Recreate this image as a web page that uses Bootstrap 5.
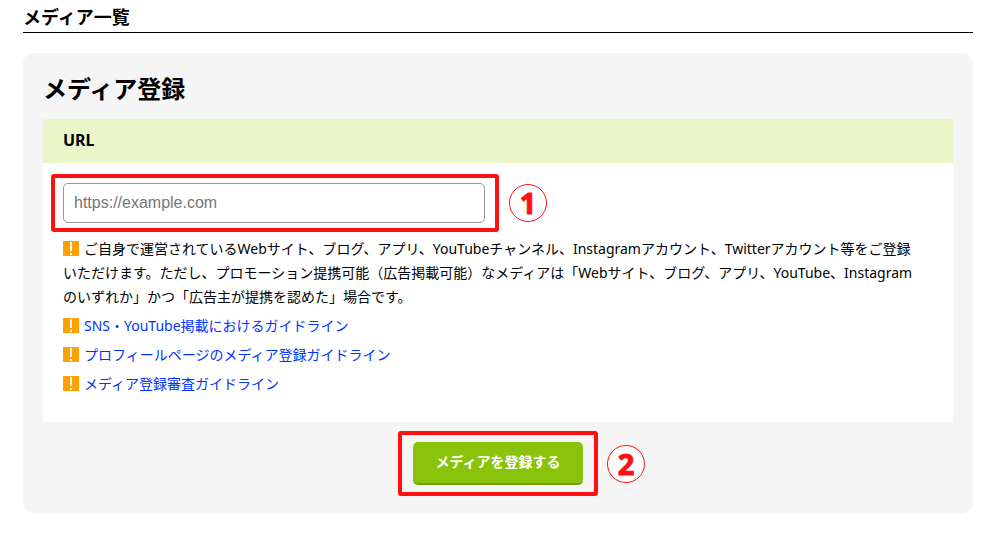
<!DOCTYPE html>
<html lang="ja">
<head>
<meta charset="utf-8">
<meta name="viewport" content="width=device-width, initial-scale=1">
<title>メディア一覧</title>
<link href="https://cdn.jsdelivr.net/npm/bootstrap@5.3.0/dist/css/bootstrap.min.css" rel="stylesheet">
<style>
  body { font-family: "Noto Sans", "Noto Sans CJK JP", sans-serif; font-size: 14px; line-height: 24px; color: #000; }
  .page { padding: 3px 30px 23px 23px; }
  .page-title { font-size: 18px; line-height: 28px; padding-bottom: 1px; border-bottom: 1px solid #000; margin-bottom: 20px; }
  .panel { background: #f5f5f5; border-radius: 10px; padding: 20px; }
  .panel-title { font-size: 24px; line-height: 32px; margin-bottom: 14px; }
  .field-head { background: #eaf6c8; padding: 9px 20px 11px; font-size: 16px; }
  .field-body { background: #fff; padding: 20px 32px 21px 20px; }
  .url-wrap { width: 422px; max-width: 85%; margin-bottom: 14px; }
  .url-wrap .form-control { height: 40px; padding: 0 10px; font: 16px "Liberation Sans", sans-serif; border: 1px solid #999; border-radius: 5px; }
  .url-wrap .form-control::placeholder { color: #757575; }
  .note { margin-bottom: 5px; }
  .note a { color: #0033ff; }
  .warn { width: 16px; height: 15px; margin-right: 5px; vertical-align: -2px; }
  .btn-entry { width: 170px; height: 43px; font-size: 14px; line-height: 20px; font-weight: 700; color: #fff; background: #89c30a; border: 0; border-bottom: 2px solid #6fa008; border-radius: 5px; padding: 0 0 2px; }
  .btn-entry:hover { color: #fff; background: #7db308; }
  .callout-box { inset: -9px -14px -9px -12px; border: 4px solid #ff1010; border-radius: 3px; pointer-events: none; }
  .callout-box.wide { inset: -11px -15px; }
  .step { left: calc(100% + 24px); top: calc(50% - 19px); width: 38px; height: 38px; border: 1px solid #ff1010; background: #fff; color: #ff1010; font-size: 29px; line-height: 36px; font-weight: 700; -webkit-text-stroke: 1px #ff1010; }
</style>
</head>
<body>
<main class="page">
  <h1 class="page-title fw-bold">メディア一覧</h1>
  <section class="panel">
    <h2 class="panel-title fw-bold">メディア登録</h2>
    <form>
      <div class="field-head fw-bold"><label for="url">URL</label></div>
      <div class="field-body">
        <div class="url-wrap position-relative">
          <input type="url" class="form-control" id="url" placeholder="https://example.com">
          <span class="callout-box position-absolute"></span>
          <span class="step position-absolute rounded-circle text-center">1</span>
        </div>
        <p class="note"><svg class="warn" viewBox="0 0 16 15"><path fill="#ff9f00" d="M0 0h16v15H0z"/><path fill="#fff" d="M7 1h2v9H7zM7 12h2v2H7z"/></svg>ご自身で運営されているWebサイト、ブログ、アプリ、YouTubeチャンネル、Instagramアカウント、Twitterアカウント等をご登録いただけます。ただし、プロモーション提携可能（広告掲載可能）なメディアは「Webサイト、ブログ、アプリ、YouTube、Instagramのいずれか」かつ「広告主が提携を認めた」場合です。</p>
        <p class="note"><svg class="warn" viewBox="0 0 16 15"><path fill="#ff9f00" d="M0 0h16v15H0z"/><path fill="#fff" d="M7 1h2v9H7zM7 12h2v2H7z"/></svg><a href="#" class="text-decoration-none">SNS・YouTube掲載におけるガイドライン</a></p>
        <p class="note"><svg class="warn" viewBox="0 0 16 15"><path fill="#ff9f00" d="M0 0h16v15H0z"/><path fill="#fff" d="M7 1h2v9H7zM7 12h2v2H7z"/></svg><a href="#" class="text-decoration-none">プロフィールページのメディア登録ガイドライン</a></p>
        <p class="note"><svg class="warn" viewBox="0 0 16 15"><path fill="#ff9f00" d="M0 0h16v15H0z"/><path fill="#fff" d="M7 1h2v9H7zM7 12h2v2H7z"/></svg><a href="#" class="text-decoration-none">メディア登録審査ガイドライン</a></p>
      </div>
      <div class="d-flex justify-content-center pt-3 mt-1 pb-2">
        <div class="position-relative">
          <button type="submit" class="btn btn-entry d-block">メディアを登録する</button>
          <span class="callout-box wide position-absolute"></span>
          <span class="step position-absolute rounded-circle text-center">2</span>
        </div>
      </div>
    </form>
  </section>
</main>
<script src="https://cdn.jsdelivr.net/npm/bootstrap@5.3.0/dist/js/bootstrap.bundle.min.js"></script>
</body>
</html>
